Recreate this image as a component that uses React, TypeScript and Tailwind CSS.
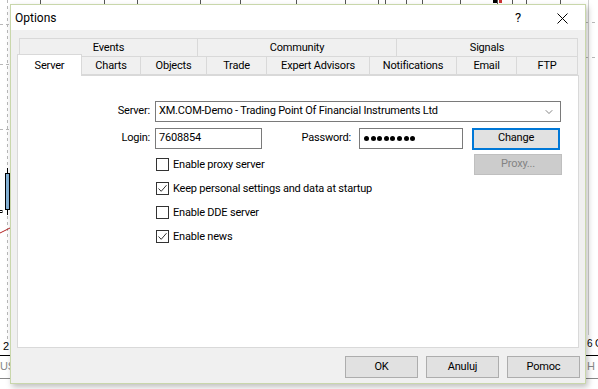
import { ChevronDown } from 'lucide-react'

const topTabs = [
  { label: 'Events', w: 'w-[179px]' },
  { label: 'Community', w: 'w-[199px]' },
  { label: 'Signals', w: 'flex-1' },
]

const bottomTabs = [
  { label: 'Charts', w: 'w-[59px]' },
  { label: 'Objects', w: 'w-[66px]' },
  { label: 'Trade', w: 'w-[60px]' },
  { label: 'Expert Advisors', w: 'w-[103px]' },
  { label: 'Notifications', w: 'w-[87px]' },
  { label: 'Email', w: 'w-[60px]' },
  { label: 'FTP', w: 'flex-1' },
]

const options = [
  { label: 'Enable proxy server', checked: false },
  { label: 'Keep personal settings and data at startup', checked: true },
  { label: 'Enable DDE server', checked: false },
  { label: 'Enable news', checked: true },
]

function Checkbox({ checked }: { checked: boolean }) {
  return (
    <div className="w-[13px] h-[13px] border border-[#333333] bg-white flex items-center justify-center">
      {checked && (
        <svg width="11" height="11" viewBox="0 0 11 11">
          <polyline points="1.5,5.5 4.2,8.3 9.5,2.2" fill="none" stroke="#333" strokeWidth="1" />
        </svg>
      )}
    </div>
  )
}

// the chart that sits behind the dialog
function ChartBackdrop() {
  return (
    <svg className="absolute inset-0" width="598" height="389">
      <line x1="7.5" y1="0" x2="7.5" y2="340" stroke="#b8b8b8" strokeDasharray="3 3" />
      <line x1="0" y1="24.5" x2="10" y2="24.5" stroke="#b8b8b8" strokeDasharray="3 3" />
      <line x1="0" y1="64.5" x2="10" y2="64.5" stroke="#b8b8b8" strokeDasharray="3 3" />
      <line x1="0" y1="129.5" x2="10" y2="129.5" stroke="#b8b8b8" strokeDasharray="3 3" />
      <line x1="586" y1="22.5" x2="598" y2="22.5" stroke="#b8b8b8" strokeDasharray="3 3" />
      <line x1="586" y1="57.5" x2="598" y2="57.5" stroke="#b8b8b8" strokeDasharray="3 3" />
      <line x1="588.5" y1="0" x2="588.5" y2="335" stroke="#d0d0d0" />
      {/* candle */}
      <line x1="7.5" y1="168" x2="7.5" y2="215" stroke="#000" />
      <rect x="5.5" y="173.5" width="4" height="36" fill="#86b3d8" stroke="#000" />
      <rect x="0" y="210.5" width="2" height="2" fill="none" stroke="#000" />
      <line x1="0" y1="233" x2="10" y2="228" stroke="#b22222" />
      {/* top ticks */}
      {[40, 104, 137, 200, 240, 296, 345, 378, 385, 406, 422, 460, 497, 512, 526, 560].map(x => (
        <line key={x} x1={x + 0.5} y1="0" x2={x + 0.5} y2="4" stroke="#555" />
      ))}
      <rect x="493" y="0" width="4" height="3" fill="#000" />
      <rect x="499" y="0" width="3" height="3" fill="#c33" />
      {/* bottom axis */}
      <line x1="0" y1="355.5" x2="10" y2="355.5" stroke="#000" />
      <line x1="0" y1="378.5" x2="10" y2="378.5" stroke="#888" />
      <line x1="586" y1="355.5" x2="598" y2="355.5" stroke="#000" />
      <line x1="586" y1="378.5" x2="598" y2="378.5" stroke="#888" />
      <text x="3" y="350" fontSize="11" fontFamily="Liberation Sans" fill="#000">2</text>
      <text x="0" y="370" fontSize="11" fontFamily="Liberation Sans" fill="#888">US</text>
      <text x="587" y="347" fontSize="10" fontFamily="Liberation Sans" fill="#000">6 C</text>
      <text x="587" y="370" fontSize="11" fontFamily="Liberation Sans" fill="#888">H</text>
    </svg>
  )
}

export default function App() {
  return (
    <div className="relative w-[598px] h-[389px] bg-white overflow-hidden text-[11px] tracking-[-0.2px] text-black [font-family:Roboto,'Liberation_Sans',sans-serif]">
      <ChartBackdrop />

      <div className="absolute left-[10px] top-[4px] w-[576px] h-[380px] border border-[#c9d7ab] bg-[#f0f0f0] flex flex-col shadow-[2px_3px_6px_rgba(0,0,0,0.25)]">
        {/* title bar */}
        <div className="h-[25px] bg-white flex items-center pl-[4px] pr-[17px]">
          <span className="text-[12px] tracking-normal mt-[1px]">Options</span>
          <span className="ml-auto text-[13px] mr-[36px] mt-[1px]">?</span>
          <svg width="11" height="11" viewBox="0 0 11 11" className="mt-[1px]">
            <path d="M0.5 0.5 L10.5 10.5 M10.5 0.5 L0.5 10.5" stroke="#000" strokeWidth="1" />
          </svg>
        </div>

        <div className="flex-1 flex flex-col px-[6px] pt-[8px]">
          {/* tabs */}
          <div className="flex h-[19px] ml-[2px] mr-[1px]">
            {topTabs.map((t, i) => (
              <div
                key={t.label}
                className={`${t.w} h-full border border-[#d9d9d9] bg-[#f0f0f0] flex items-center justify-center pt-[1px] ${i > 0 ? 'border-l-0' : ''}`}
              >
                {t.label}
              </div>
            ))}
          </div>
          <div className="flex h-[18px] items-end">
            <div className="relative z-10 w-[65px] h-[22px] -mb-[1px] bg-white border border-b-0 border-[#d9d9d9] flex items-start justify-center pt-[3px]">
              Server
            </div>
            <div className="flex flex-1 h-full mr-[1px]">
              {bottomTabs.map(t => (
                <div
                  key={t.label}
                  className={`${t.w} h-full border border-t-0 border-l-0 border-[#d9d9d9] bg-[#f0f0f0] flex items-center justify-center pt-[1px]`}
                >
                  {t.label}
                </div>
              ))}
            </div>
          </div>

          {/* panel */}
          <div className="h-[273px] bg-white border border-[#d9d9d9] pt-[25px]">
            <div className="flex items-center h-[21px]">
              <span className="w-[132px] text-right">Server:</span>
              <div className="ml-[5px] w-[406px] h-full border border-[#7a7a7a] flex items-center pl-[3px] pr-[5px]">
                <span>XM.COM-Demo - Trading Point Of Financial Instruments Ltd</span>
                <ChevronDown size={12} strokeWidth={1.2} className="ml-auto text-[#333]" />
              </div>
            </div>

            <div className="flex items-center h-[21px] mt-[6px]">
              <span className="w-[132px] text-right">Login:</span>
              <div className="ml-[5px] w-[107px] h-full border border-[#7a7a7a] flex items-center pl-[3px]">
                7608854
              </div>
              <span className="w-[89px] text-right">Password:</span>
              <div className="ml-[8px] w-[104px] h-full border border-[#7a7a7a] flex items-center pl-[4px] gap-[1.6px]">
                {Array.from({ length: 8 }).map((_, i) => (
                  <span key={i} className="w-[5px] h-[5px] rounded-full bg-black" />
                ))}
              </div>
              <button className="ml-[9px] w-[88px] h-[22px] border-2 border-[#0078d7] bg-[#e1e1e1] flex items-center justify-center">
                Change
              </button>
            </div>

            <div className="flex mt-[5px]">
              <div className="flex flex-col gap-[11px] ml-[138px] pt-[4px]">
                {options.map(o => (
                  <div key={o.label} className="flex items-center h-[13px]">
                    <Checkbox checked={o.checked} />
                    <span className="ml-[4px] leading-none">{o.label}</span>
                  </div>
                ))}
              </div>
              <button className="ml-auto mr-[16px] w-[88px] h-[21px] border border-[#bfbfbf] bg-[#cccccc] text-[#838383] flex items-center justify-center">
                Proxy...
              </button>
            </div>
          </div>

          {/* footer buttons */}
          <div className="flex justify-end gap-[8px] mt-[8px] -mr-[1px]">
            {['OK', 'Anuluj', 'Pomoc'].map(b => (
              <button key={b} className="w-[73px] h-[22px] border border-[#adadad] bg-[#e1e1e1] flex items-center justify-center">
                {b}
              </button>
            ))}
          </div>
        </div>
      </div>
    </div>
  )
}
